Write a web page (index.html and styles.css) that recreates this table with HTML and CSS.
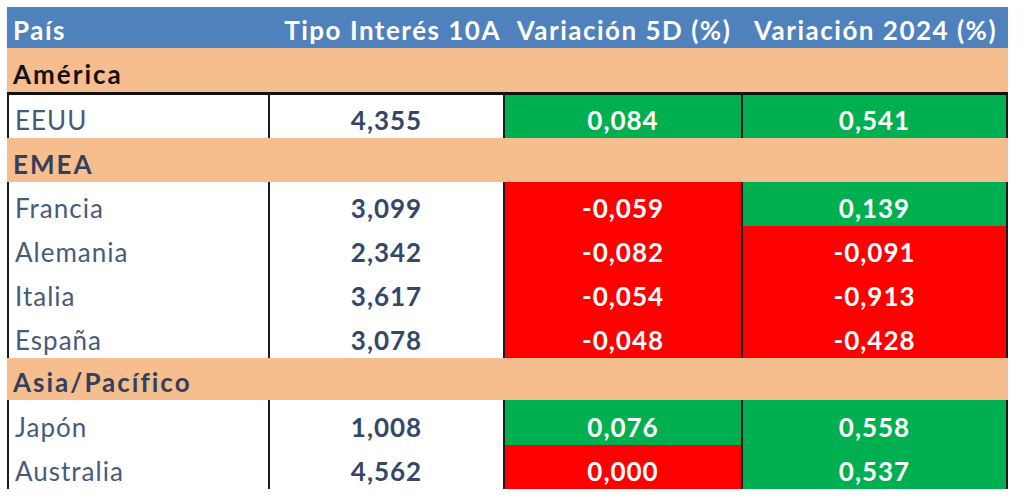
FILE: index.html
```html
<!DOCTYPE html>
<html lang="es">
<head>
<meta charset="utf-8">
<title>Tipos de interés 10A</title>
<link rel="stylesheet" href="styles.css">
</head>
<body>
<div class="sheet">
  <div class="cell head left">País</div>
  <div class="cell head right">Tipo Interés 10A</div>
  <div class="cell head center">Variación 5D (%)</div>
  <div class="cell head center">Variación 2024 (%)</div>

  <div class="section america">América</div>

  <div class="cell name first-row">EEUU</div>
  <div class="cell rate first-row">4,355</div>
  <div class="cell val up first-row">0,084</div>
  <div class="cell val up first-row">0,541</div>

  <div class="section">EMEA</div>

  <div class="cell name">Francia</div>
  <div class="cell rate">3,099</div>
  <div class="cell val down">-0,059</div>
  <div class="cell val up">0,139</div>

  <div class="cell name">Alemania</div>
  <div class="cell rate">2,342</div>
  <div class="cell val down">-0,082</div>
  <div class="cell val down">-0,091</div>

  <div class="cell name">Italia</div>
  <div class="cell rate">3,617</div>
  <div class="cell val down">-0,054</div>
  <div class="cell val down">-0,913</div>

  <div class="cell name">España</div>
  <div class="cell rate">3,078</div>
  <div class="cell val down">-0,048</div>
  <div class="cell val down">-0,428</div>

  <div class="section short">Asia/Pacífico</div>

  <div class="cell name tall">Japón</div>
  <div class="cell rate tall">1,008</div>
  <div class="cell val up tall">0,076</div>
  <div class="cell val up tall">0,558</div>

  <div class="cell name">Australia</div>
  <div class="cell rate">4,562</div>
  <div class="cell val down">0,000</div>
  <div class="cell val up">0,537</div>
</div>
</body>
</html>
```

FILE: styles.css
```css
* { box-sizing: border-box; }

html, body {
  margin: 0;
  padding: 0;
  background: #ffffff;
}

body {
  font-family: Lato, "Open Sans", sans-serif;
  font-size: 26px;
  letter-spacing: 1px;
}

.sheet {
  margin: 7px 0 0 7px;
  width: 1001px;
  display: grid;
  grid-template-columns: 263px 235px 238px 265px;
}

.cell {
  height: 44px;
  display: flex;
  align-items: flex-end;
  padding-bottom: 6px;
  line-height: 24px;
  white-space: nowrap;
}

.head {
  height: 41px;
  background: #4f81bd;
  color: #ffffff;
  font-weight: 700;
  letter-spacing: 1.5px;
}
.head.left { padding-left: 6px; }
.head.right { justify-content: flex-end; padding-right: 4px; }
.head.center { justify-content: center; }

.section {
  grid-column: 1 / -1;
  height: 44px;
  background: #f6bd8f;
  color: #33405a;
  font-weight: 700;
  letter-spacing: 2px;
  line-height: 24px;
  display: flex;
  align-items: flex-end;
  padding: 0 0 6px 6px;
}
.section.america { color: #111111; }
.section.short { height: 42px; }

.name {
  color: #475b78;
  padding-left: 6px;
  background: #ffffff;
  border-left: 2px solid #1c1c1c;
  border-right: 2px solid #1c1c1c;
}

.rate {
  color: #34476a;
  font-weight: 700;
  justify-content: center;
  background: #ffffff;
  border-right: 2px solid #1c1c1c;
}

.val {
  color: #ffffff;
  font-weight: 700;
  justify-content: center;
  border-right: 2px solid #1c1c1c;
}

.up { background: #00b050; }
.down { background: #ff0000; }

.first-row {
  height: 46px;
  border-top: 3px solid #111111;
}

.tall { height: 45px; }
```
